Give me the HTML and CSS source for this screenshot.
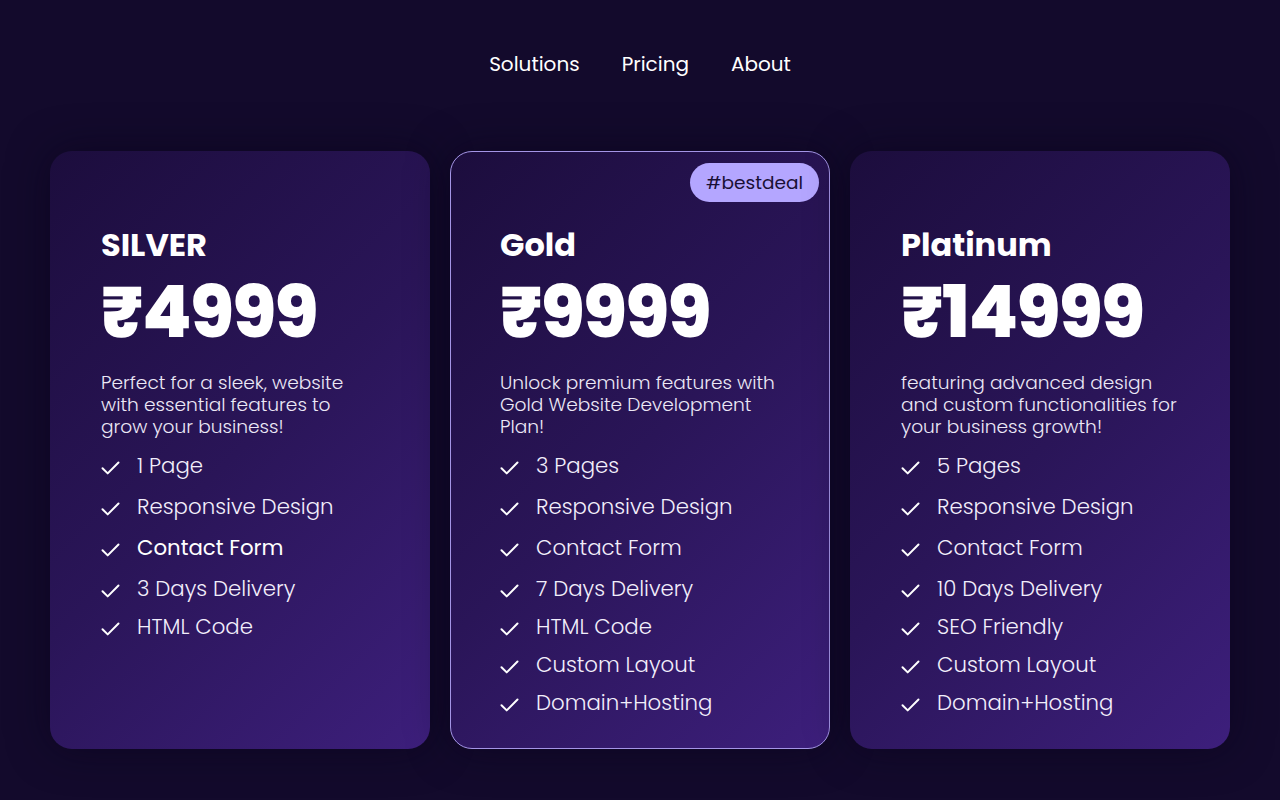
FILE: index.html
```html
<!DOCTYPE html>
<html lang="en">
<head>
<meta charset="utf-8">
<title>Pricing</title>
<link rel="stylesheet" href="styles.css">
</head>
<body>
<nav class="nav">
  <a href="#">Solutions</a>
  <a href="#">Pricing</a>
  <a href="#">About</a>
</nav>
<main class="plans">
  <section class="card">
    <h2 class="name">SILVER</h2>
    <div class="price">₹4999</div>
    <p class="desc">Perfect for a sleek, website with essential features to grow your business!</p>
    <ul class="features">
      <li><svg viewBox="0 0 19 14"><path d="M1.5 7.2l5.2 5.2L17.5 1.5"/></svg>1 Page</li>
      <li><svg viewBox="0 0 19 14"><path d="M1.5 7.2l5.2 5.2L17.5 1.5"/></svg>Responsive Design</li>
      <li class="strong"><svg viewBox="0 0 19 14"><path d="M1.5 7.2l5.2 5.2L17.5 1.5"/></svg>Contact Form</li>
      <li><svg viewBox="0 0 19 14"><path d="M1.5 7.2l5.2 5.2L17.5 1.5"/></svg>3 Days Delivery</li>
      <li><svg viewBox="0 0 19 14"><path d="M1.5 7.2l5.2 5.2L17.5 1.5"/></svg>HTML Code</li>
    </ul>
  </section>
  <section class="card featured">
    <span class="badge">#bestdeal</span>
    <h2 class="name">Gold</h2>
    <div class="price">₹9999</div>
    <p class="desc">Unlock premium features with Gold Website Development Plan!</p>
    <ul class="features">
      <li><svg viewBox="0 0 19 14"><path d="M1.5 7.2l5.2 5.2L17.5 1.5"/></svg>3 Pages</li>
      <li><svg viewBox="0 0 19 14"><path d="M1.5 7.2l5.2 5.2L17.5 1.5"/></svg>Responsive Design</li>
      <li><svg viewBox="0 0 19 14"><path d="M1.5 7.2l5.2 5.2L17.5 1.5"/></svg>Contact Form</li>
      <li><svg viewBox="0 0 19 14"><path d="M1.5 7.2l5.2 5.2L17.5 1.5"/></svg>7 Days Delivery</li>
      <li><svg viewBox="0 0 19 14"><path d="M1.5 7.2l5.2 5.2L17.5 1.5"/></svg>HTML Code</li>
      <li><svg viewBox="0 0 19 14"><path d="M1.5 7.2l5.2 5.2L17.5 1.5"/></svg>Custom Layout</li>
      <li><svg viewBox="0 0 19 14"><path d="M1.5 7.2l5.2 5.2L17.5 1.5"/></svg>Domain+Hosting</li>
    </ul>
  </section>
  <section class="card">
    <h2 class="name">Platinum</h2>
    <div class="price">₹14999</div>
    <p class="desc">featuring advanced design and custom functionalities for your business growth!</p>
    <ul class="features">
      <li><svg viewBox="0 0 19 14"><path d="M1.5 7.2l5.2 5.2L17.5 1.5"/></svg>5 Pages</li>
      <li><svg viewBox="0 0 19 14"><path d="M1.5 7.2l5.2 5.2L17.5 1.5"/></svg>Responsive Design</li>
      <li><svg viewBox="0 0 19 14"><path d="M1.5 7.2l5.2 5.2L17.5 1.5"/></svg>Contact Form</li>
      <li><svg viewBox="0 0 19 14"><path d="M1.5 7.2l5.2 5.2L17.5 1.5"/></svg>10 Days Delivery</li>
      <li><svg viewBox="0 0 19 14"><path d="M1.5 7.2l5.2 5.2L17.5 1.5"/></svg>SEO Friendly</li>
      <li><svg viewBox="0 0 19 14"><path d="M1.5 7.2l5.2 5.2L17.5 1.5"/></svg>Custom Layout</li>
      <li><svg viewBox="0 0 19 14"><path d="M1.5 7.2l5.2 5.2L17.5 1.5"/></svg>Domain+Hosting</li>
    </ul>
  </section>
</main>
</body>
</html>
```
FILE: styles.css
```css
* { box-sizing: border-box; }
html, body { height: 100%; }
body {
  margin: 0;
  background: #130a2c;
  color: #fff;
  font-family: "Poppins", "Inter", "Noto Sans", sans-serif;
}
.nav {
  display: flex;
  justify-content: center;
  gap: 42px;
  padding-top: 50px;
  height: 151px;
}
.nav a {
  color: #fff;
  text-decoration: none;
  font-size: 20px;
  line-height: 28px;
  font-weight: 400;
}
.plans {
  display: grid;
  grid-template-columns: repeat(3, 380px);
  gap: 20px;
  padding: 0 50px;
}
.card {
  position: relative;
  height: 598px;
  border-radius: 22px;
  padding: 74px 40px 0 51px;
  background: linear-gradient(135deg, #1c0d3d 0%, #2a1558 50%, #3d1f7c 100%);
  box-shadow: 0 0 40px rgba(8, 2, 24, 0.5);
}
.card.featured {
  border: 1px solid #a495e6;
  padding: 73px 39px 0 49px;
}
.badge {
  position: absolute;
  top: 11px;
  right: 10px;
  height: 39px;
  padding: 0 16px;
  border-radius: 20px;
  background: #b4a6ff;
  color: #1a1036;
  font-size: 18.5px;
  line-height: 39px;
}
.name {
  margin: 0;
  font-size: 32px;
  line-height: 40px;
  font-weight: 700;
}
.price {
  margin-top: 7px;
  font-size: 72px;
  line-height: 80px;
  font-weight: 800;
  letter-spacing: -1.4px;
}
.desc {
  margin: 20px 0 0;
  font-size: 18.6px;
  line-height: 22px;
  font-weight: 300;
  color: #ece8f6;
  max-width: 280px;
}
.features {
  list-style: none;
  margin: 14px 0 0;
  padding: 0;
  display: flex;
  flex-direction: column;
  gap: 10px;
}
.features li {
  display: flex;
  align-items: center;
  gap: 17px;
  font-size: 21.3px;
  line-height: 28px;
  font-weight: 300;
  color: #f2eefb;
}
.features li:nth-child(-n+3) { margin-bottom: 3px; }
.features li.strong { font-weight: 400; color: #fff; }
.features svg {
  width: 19px;
  height: 14px;
  margin-top: 3px;
  flex: none;
  fill: none;
  stroke: #fff;
  stroke-width: 2;
  stroke-linecap: round;
  stroke-linejoin: round;
}
```
